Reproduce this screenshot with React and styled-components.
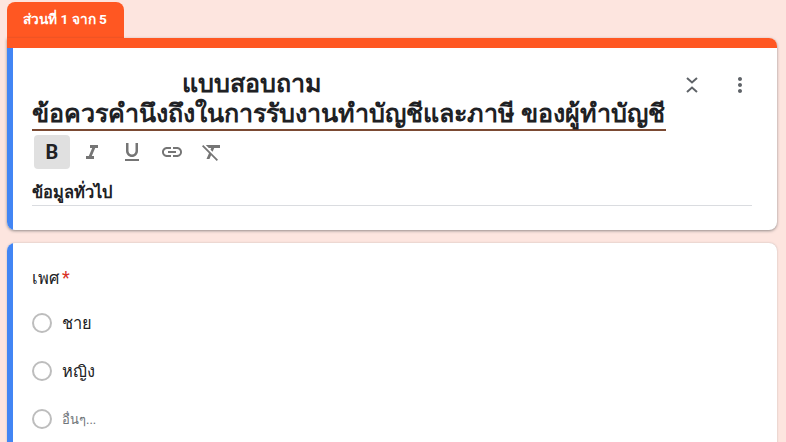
import React from 'react';
import styled, { createGlobalStyle } from 'styled-components';

const Global = createGlobalStyle`
  html, body { margin: 0; padding: 0; background: #fde5df; height: 442px; overflow: hidden; }
  body { font-family: Roboto, "Liberation Sans", Arial, sans-serif; color: #202124; }
`;
const Page = styled.div`
  display: flex;
  flex-direction: column;
  padding: 2px 9px 0 7px;
  height: 442px;
  box-sizing: border-box;
  overflow: hidden;
`;
const Tab = styled.div`
  align-self: flex-start;
  width: 117px;
  height: 36px;
  box-sizing: border-box;
  padding-left: 16px;
  background: #ff5722;
  border-radius: 8px 8px 0 0;
  color: #fff;
  font-size: 13.7px;
  font-weight: 700;
  line-height: 34px;
  flex: none;
`;
const Card = styled.section`
  position: relative;
  background: #fff;
  border-radius: 8px;
  overflow: hidden;
  box-shadow: 0 1px 3px rgba(60, 64, 67, 0.55);
`;
const HeaderCard = styled(Card)`
  border-radius: 0 8px 8px 8px;
  height: 192px;
  flex: none;
`;
const TopStrip = styled.div`
  height: 10px;
  background: #ff5722;
`;
const BlueBar = styled.div`
  position: absolute;
  left: 0;
  bottom: 0;
  top: ${p => p.$top}px;
  width: 6px;
  background: #4285f4;
`;
const HeaderBody = styled.div`
  display: flex;
  flex-direction: column;
  padding: 21px 25px 0 25px;
`;
const Title = styled.div`
  align-self: flex-start;
  padding-right: 1px;
  border-bottom: 2px solid #7b4a33;
  font-size: 25.1px;
  font-weight: 700;
  line-height: 30px;
  color: #202124;
  white-space: pre;
`;
const Toolbar = styled.div`
  display: flex;
  align-items: center;
  gap: 4px;
  margin: 4px 0 0 2px;
`;
const ToolButton = styled.div`
  width: 36px;
  height: 34px;
  display: flex;
  align-items: center;
  justify-content: center;
  border-radius: 4px;
  background: ${p => (p.$active ? '#e0e0e0' : 'transparent')};
  color: ${p => (p.$active ? '#202124' : '#757575')};
  font-size: 20px;
`;
const Description = styled.div`
  margin-top: 10px;
  height: 27px;
  box-sizing: border-box;
  border-bottom: 1px solid #dadce0;
  font-size: 16.4px;
  font-weight: 700;
  line-height: 28px;
  color: #202124;
`;
const Actions = styled.div`
  position: absolute;
  top: 35px;
  right: 25px;
  display: flex;
  align-items: center;
  gap: 24px;
  color: #5f6368;
`;
const QuestionCard = styled(Card)`
  margin-top: 13px;
  flex: none;
  height: 220px;
  box-sizing: border-box;
  padding: 24px 25px 0 25px;
  box-shadow: 0 0 2px rgba(60, 64, 67, 0.3);
`;
const Question = styled.div`
  font-size: 16.4px;
  line-height: 22px;
  color: #202124;
`;
const Star = styled.span`
  color: #d93025;
  margin-left: 3px;
  font-size: 18px;
`;
const Options = styled.div`
  display: flex;
  flex-direction: column;
  margin-top: 9px;
`;
const Option = styled.div`
  display: flex;
  align-items: center;
  gap: 10px;
  height: 48px;
  font-size: ${p => (p.$other ? '13px' : '16.4px')};
  color: ${p => (p.$other ? '#70757a' : '#202124')};
`;
const Radio = styled.div`
  width: 20px;
  height: 20px;
  box-sizing: border-box;
  border: 2px solid #bdbdbd;
  border-radius: 50%;
`;

const Ico = ({ children }) => (
  <svg width={24} height={24} viewBox="0 0 24 24" fill="currentColor" aria-hidden="true">{children}</svg>
);

export default function App() {
  return (
    <Page>
      <Global />
      <Tab>ส่วนที่ 1 จาก 5</Tab>
      <HeaderCard>
        <TopStrip />
        <BlueBar $top={10} />
        <HeaderBody>
          <Title>{'                        แบบสอบถาม\nข้อควรคำนึงถึงในการรับงานทำบัญชีและภาษี ของผู้ทำบัญชี'}</Title>
          <Toolbar>
            <ToolButton $active><b>B</b></ToolButton>
            <ToolButton>
              <Ico><path d="M10 5v3h2.210l-3.420 8H6v3h8v-3h-2.210l3.420-8H18V5z" /></Ico>
            </ToolButton>
            <ToolButton>
              <Ico><path d="M12 17c3.310 0 6-2.690 6-6V3h-2.500v8c0 1.930-1.570 3.500-3.500 3.500S8.500 12.930 8.500 11V3H6v8c0 3.310 2.690 6 6 6zm-7 2v2h14v-2H5z" /></Ico>
            </ToolButton>
            <ToolButton>
              <Ico><path d="M3.900 12c0-1.710 1.390-3.100 3.100-3.100h4V7H7c-2.760 0-5 2.240-5 5s2.240 5 5 5h4v-1.900H7c-1.710 0-3.100-1.390-3.100-3.100zM8 13h8v-2H8v2zm9-6h-4v1.900h4c1.710 0 3.100 1.390 3.100 3.100s-1.390 3.100-3.100 3.100h-4V17h4c2.760 0 5-2.240 5-5s-2.240-5-5-5z" /></Ico>
            </ToolButton>
            <ToolButton>
              <Ico><path d="M6 5v.180L8.820 8h2.400l-.72 1.680 2.100 2.100L14.210 8H20V5H6zM3.270 5 2 6.270l6.970 6.970L6.500 19h3l1.570-3.660L16.730 21 18 19.730 3.550 5.270 3.270 5z" /></Ico>
            </ToolButton>
          </Toolbar>
          <Description>ข้อมูลทั่วไป</Description>
        </HeaderBody>
        <Actions>
          <Ico><path d="M7 5l5 4.500L17 5M7 19l5-4.500L17 19" fill="none" stroke="currentColor" strokeWidth="2" /></Ico>
          <Ico><path d="M12 8c1.100 0 2-.9 2-2s-.9-2-2-2-2 .9-2 2 .9 2 2 2zm0 2c-1.100 0-2 .9-2 2s.9 2 2 2 2-.9 2-2-.9-2-2-2zm0 6c-1.100 0-2 .9-2 2s.9 2 2 2 2-.9 2-2-.9-2-2-2z" /></Ico>
        </Actions>
      </HeaderCard>
      <QuestionCard>
        <BlueBar $top={0} />
        <Question>เพศ<Star>*</Star></Question>
        <Options>
          <Option><Radio />ชาย</Option>
          <Option><Radio />หญิง</Option>
          <Option $other><Radio />อื่นๆ...</Option>
        </Options>
      </QuestionCard>
    </Page>
  );
}
